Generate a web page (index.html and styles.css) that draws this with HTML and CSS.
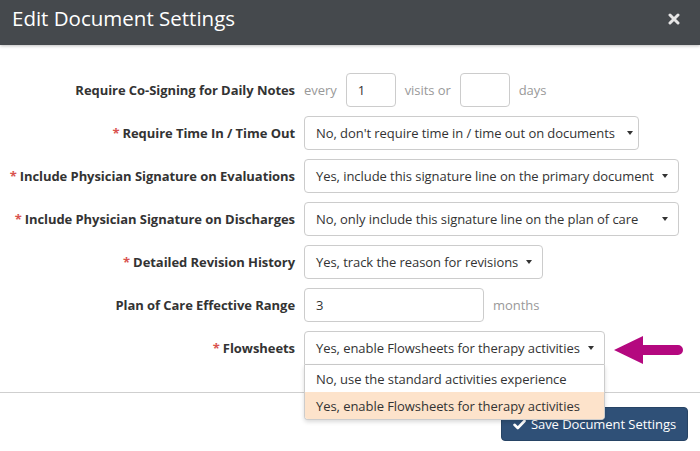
FILE: index.html
```html
<!DOCTYPE html>
<html lang="en">
<head>
<meta charset="utf-8">
<title>Edit Document Settings</title>
<link rel="stylesheet" href="styles.css">
</head>
<body>
<div class="modal">
  <div class="modal-header">
    <h1 class="modal-title">Edit Document Settings</h1>
    <button class="close" aria-label="Close">
      <svg width="12" height="12" viewBox="0 0 12 12"><path d="M2 2 L10 10 M10 2 L2 10" stroke="#e6e6e6" stroke-width="3" stroke-linecap="round"/></svg>
    </button>
  </div>
  <div class="modal-body">
    <div class="form-grid">
      <label class="label">Require Co-Signing for Daily Notes</label>
      <div class="control inline">
        <span class="muted">every</span>
        <span class="input small">1</span>
        <span class="muted">visits or</span>
        <span class="input small"></span>
        <span class="muted">days</span>
      </div>

      <label class="label"><span class="req">*</span>Require Time In / Time Out</label>
      <div class="control">
        <div class="select sel-time"><span class="sel-text">No, don't require time in / time out on documents</span><span class="caret"></span></div>
      </div>

      <label class="label"><span class="req">*</span>Include Physician Signature on Evaluations</label>
      <div class="control">
        <div class="select sel-sig"><span class="sel-text">Yes, include this signature line on the primary document</span><span class="caret"></span></div>
      </div>

      <label class="label"><span class="req">*</span>Include Physician Signature on Discharges</label>
      <div class="control">
        <div class="select sel-sig"><span class="sel-text">No, only include this signature line on the plan of care</span><span class="caret"></span></div>
      </div>

      <label class="label"><span class="req">*</span>Detailed Revision History</label>
      <div class="control">
        <div class="select sel-rev"><span class="sel-text">Yes, track the reason for revisions</span><span class="caret"></span></div>
      </div>

      <label class="label">Plan of Care Effective Range</label>
      <div class="control inline">
        <span class="input wide">3</span>
        <span class="muted">months</span>
      </div>

      <label class="label"><span class="req">*</span>Flowsheets</label>
      <div class="control">
        <div class="select-wrap">
          <div class="select sel-flow open"><span class="sel-text">Yes, enable Flowsheets for therapy activities</span><span class="caret"></span></div>
          <ul class="menu">
            <li class="menu-item">No, use the standard activities experience</li>
            <li class="menu-item active">Yes, enable Flowsheets for therapy activities</li>
          </ul>
          <svg class="pointer" width="72" height="34" viewBox="0 0 72 34">
            <path d="M2 16 L31 2 L31 11 L66 11 A5 5 0 0 1 66 21 L31 21 L31 30 Z" fill="#b4087f"/>
          </svg>
        </div>
      </div>
    </div>
  </div>
  <div class="modal-footer">
    <button class="btn-primary">
      <svg width="13" height="11" viewBox="0 0 13 11"><path d="M1.5 5.8 L4.8 9 L11.5 2" fill="none" stroke="#fff" stroke-width="2.6" stroke-linecap="round" stroke-linejoin="round"/></svg>
      <span>Save Document Settings</span>
    </button>
  </div>
</div>
</body>
</html>
```
FILE: styles.css
```css
* { box-sizing: border-box; }
html, body { margin: 0; padding: 0; background: #fff; }
body {
  font-family: "Open Sans", "Liberation Sans", sans-serif;
  font-size: 13px;
  letter-spacing: -0.06px;
  color: #333;
}
.modal { width: 700px; height: 451px; overflow: hidden; }
.modal-header {
  height: 45px;
  background: #45494d;
  display: flex;
  align-items: flex-start;
  justify-content: space-between;
  padding: 4px 20px 0 12px;
  box-shadow: 0 1px 3px rgba(0,0,0,.25);
  position: relative;
  z-index: 1;
}
.modal-title {
  margin: 0;
  font-size: 20.5px;
  font-weight: 400;
  color: #fff;
  letter-spacing: 0;
  line-height: 28px;
}
.close {
  background: none;
  border: 0;
  padding: 0;
  margin-top: 9px;
  display: flex;
}
.modal-body {
  padding: 28px 0 27px 0;
  border-bottom: 1px solid #cfcfcf;
}
.form-grid {
  display: grid;
  grid-template-columns: 295px auto;
  column-gap: 9px;
  row-gap: 9px;
  align-items: center;
}
.label {
  text-align: right;
  font-weight: 700;
  color: #333;
  white-space: nowrap;
}
.req { color: #d9534f; margin-right: 3px; }
.control { display: flex; align-items: center; }
.inline { gap: 9px; }
.muted { color: #999; }
.input {
  height: 34px;
  border: 1px solid #ccc;
  border-radius: 4px;
  padding: 0 11px;
  display: flex;
  align-items: center;
  color: #333;
  background: #fff;
}
.input.small { width: 50px; }
.input.wide { width: 180px; }
.select {
  height: 34px;
  border: 1px solid #ccc;
  border-radius: 4px;
  padding: 0 10px 0 11px;
  display: flex;
  align-items: center;
  background: #fff;
  white-space: nowrap;
}
.select.open { border-radius: 4px 4px 0 0; }
.sel-text { flex: 1; }
.caret {
  width: 0; height: 0;
  border-left: 3.5px solid transparent;
  border-right: 3.5px solid transparent;
  border-top: 4px solid #333;
  margin-left: 8px;
}
.sel-time { width: 335px; padding-right: 5px; }
.sel-sig { width: 375px; }
.sel-rev { width: 239px; }
.sel-flow { width: 301px; }
.select-wrap { position: relative; }
.menu {
  position: absolute;
  top: 34px;
  left: 0;
  width: 301px;
  margin: 0;
  padding: 0;
  list-style: none;
  background: #fff;
  border: 1px solid #ccc;
  border-top: 0;
  border-radius: 0 0 4px 4px;
  box-shadow: 0 2px 4px rgba(0,0,0,.15);
  z-index: 5;
  overflow: hidden;
}
.menu-item {
  height: 27px;
  display: flex;
  align-items: center;
  padding: 0 11px;
  white-space: nowrap;
}
.menu-item.active { background: #fde3cb; }
.pointer {
  position: absolute;
  left: 308px;
  top: 3px;
}
.modal-footer {
  display: flex;
  justify-content: flex-end;
  padding: 14px 12px;
}
.btn-primary {
  height: 34px;
  width: 187px;
  background: #2f5077;
  border: 1px solid #274465;
  border-radius: 4px;
  color: #fff;
  font-family: "Open Sans", "Liberation Sans", sans-serif;
  font-size: 13px;
  letter-spacing: -0.06px;
  white-space: nowrap;
  display: flex;
  align-items: center;
  justify-content: center;
  gap: 5px;
  padding: 0 8px;
}
```
